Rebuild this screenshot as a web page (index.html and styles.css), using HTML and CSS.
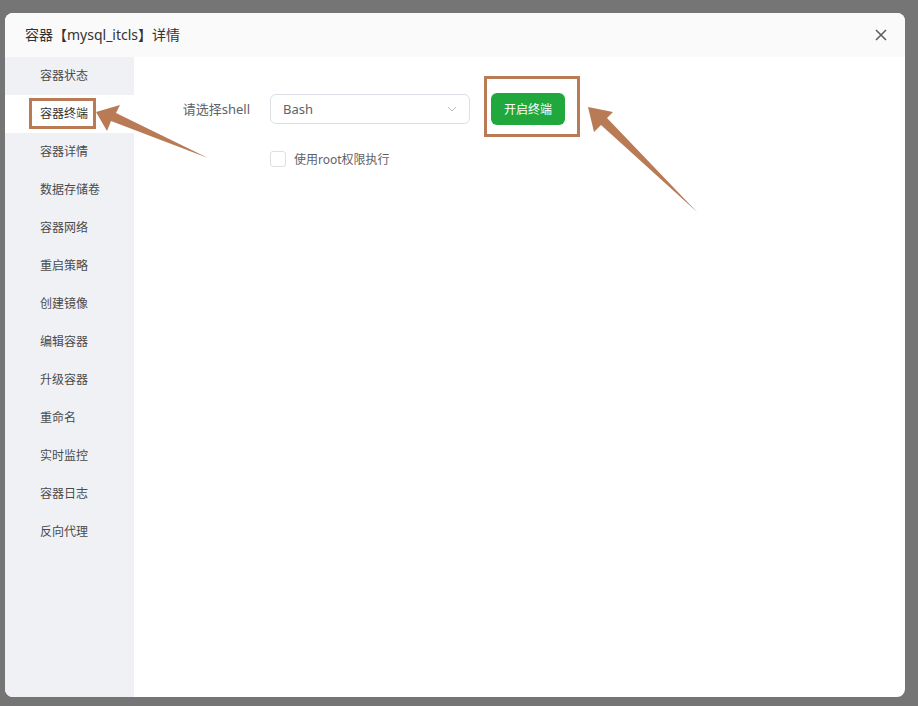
FILE: index.html
```html
<!DOCTYPE html>
<html lang="zh-CN">
<head>
<meta charset="utf-8">
<title>容器详情</title>
<link rel="stylesheet" href="styles.css">
</head>
<body>
<div class="dialog">
  <div class="dialog-header">
    <span class="dialog-title">容器【mysql_itcls】详情</span>
    <button class="close-btn" aria-label="关闭">
      <svg width="12" height="12" viewBox="0 0 12 12"><path d="M1 1L11 11M11 1L1 11" stroke="#5a5a5a" stroke-width="1.5" fill="none"/></svg>
    </button>
  </div>
  <div class="dialog-body">
    <ul class="side-menu">
      <li class="menu-item">容器状态</li>
      <li class="menu-item active">容器终端</li>
      <li class="menu-item">容器详情</li>
      <li class="menu-item">数据存储卷</li>
      <li class="menu-item">容器网络</li>
      <li class="menu-item">重启策略</li>
      <li class="menu-item">创建镜像</li>
      <li class="menu-item">编辑容器</li>
      <li class="menu-item">升级容器</li>
      <li class="menu-item">重命名</li>
      <li class="menu-item">实时监控</li>
      <li class="menu-item">容器日志</li>
      <li class="menu-item">反向代理</li>
    </ul>
    <div class="panel">
      <div class="form-grid">
        <label class="form-label">请选择shell</label>
        <div class="form-controls">
          <div class="select">
            <span class="select-value">Bash</span>
            <svg class="select-arrow" width="10" height="6" viewBox="0 0 10 6"><path d="M1 1L5 5L9 1" stroke="#b4b8c0" stroke-width="1" fill="none"/></svg>
          </div>
          <button class="btn-primary">开启终端</button>
        </div>
        <span></span>
        <label class="checkbox">
          <span class="checkbox-box"></span>
          <span class="checkbox-text">使用root权限执行</span>
        </label>
      </div>
    </div>
  </div>
</div>

<!-- callouts drawn over the dialog -->
<svg class="callouts" width="918" height="706" viewBox="0 0 918 706">
  <rect x="30.5" y="99.5" width="64" height="28" fill="none" stroke="#b97a56" stroke-width="3"/>
  <rect x="485.5" y="77.5" width="93" height="58" fill="none" stroke="#b97a56" stroke-width="3"/>
  <polygon points="96,112 120,105 116,113 208,158 111,121 107,131" fill="#b97a56"/>
  <polygon points="588,107 613,112 607,118 697,212 601,125 594,132" fill="#b97a56"/>
</svg>
</body>
</html>
```

FILE: styles.css
```css
* {
  box-sizing: border-box;
}

html, body {
  margin: 0;
  padding: 0;
}

body {
  width: 918px;
  height: 706px;
  background: #747574;
  font-family: "Noto Sans", "Noto Sans CJK SC", sans-serif;
  overflow: hidden;
  position: relative;
  padding: 13px 13px 9px 5px;
}

.dialog {
  width: 900px;
  height: 684px;
  background: #ffffff;
  border-radius: 8px;
  overflow: hidden;
  display: flex;
  flex-direction: column;
}

.dialog-header {
  height: 44px;
  flex: none;
  background: #fafafa;
  display: flex;
  align-items: center;
  justify-content: space-between;
  padding: 0 18px 0 20px;
}

.dialog-title {
  font-size: 14px;
  line-height: 20px;
  color: #333333;
}

.close-btn {
  border: 0;
  background: none;
  padding: 0;
  width: 12px;
  height: 12px;
  display: flex;
}

.dialog-body {
  flex: 1;
  display: flex;
}

.side-menu {
  list-style: none;
  margin: 0;
  padding: 0;
  width: 129px;
  flex: none;
  background: #f0f1f5;
}

.menu-item {
  height: 38px;
  line-height: 38px;
  padding-left: 35px;
  font-size: 12px;
  color: #4a4a4a;
}

.menu-item.active {
  background: #ffffff;
  color: #333333;
}

.panel {
  flex: 1;
  padding: 36px 0 0 34px;
}

.form-grid {
  display: grid;
  grid-template-columns: 82px auto;
  column-gap: 20px;
  row-gap: 26px;
  align-items: center;
  justify-content: start;
}

.form-label {
  text-align: right;
  font-size: 13px;
  line-height: 32px;
  color: #606266;
  white-space: nowrap;
}

.form-controls {
  display: flex;
  align-items: center;
  gap: 21px;
}

.select {
  width: 200px;
  height: 30px;
  border: 1px solid #dcdfe6;
  border-radius: 6px;
  display: flex;
  align-items: center;
  justify-content: space-between;
  padding: 0 12px 0 12px;
}

.select-value {
  font-size: 13px;
  color: #606266;
}

.btn-primary {
  width: 74px;
  height: 32px;
  border: 0;
  border-radius: 6px;
  background: #21a83d;
  color: #ffffff;
  font-family: inherit;
  font-size: 12px;
  padding: 0;
}

.checkbox {
  display: flex;
  align-items: center;
  gap: 8px;
  height: 16px;
}

.checkbox-box {
  width: 16px;
  height: 16px;
  border: 1px solid #dcdfe6;
  border-radius: 3px;
  background: #ffffff;
}

.checkbox-text {
  font-size: 12px;
  color: #606266;
}

.callouts {
  position: absolute;
  left: 0;
  top: 0;
  pointer-events: none;
}
```
